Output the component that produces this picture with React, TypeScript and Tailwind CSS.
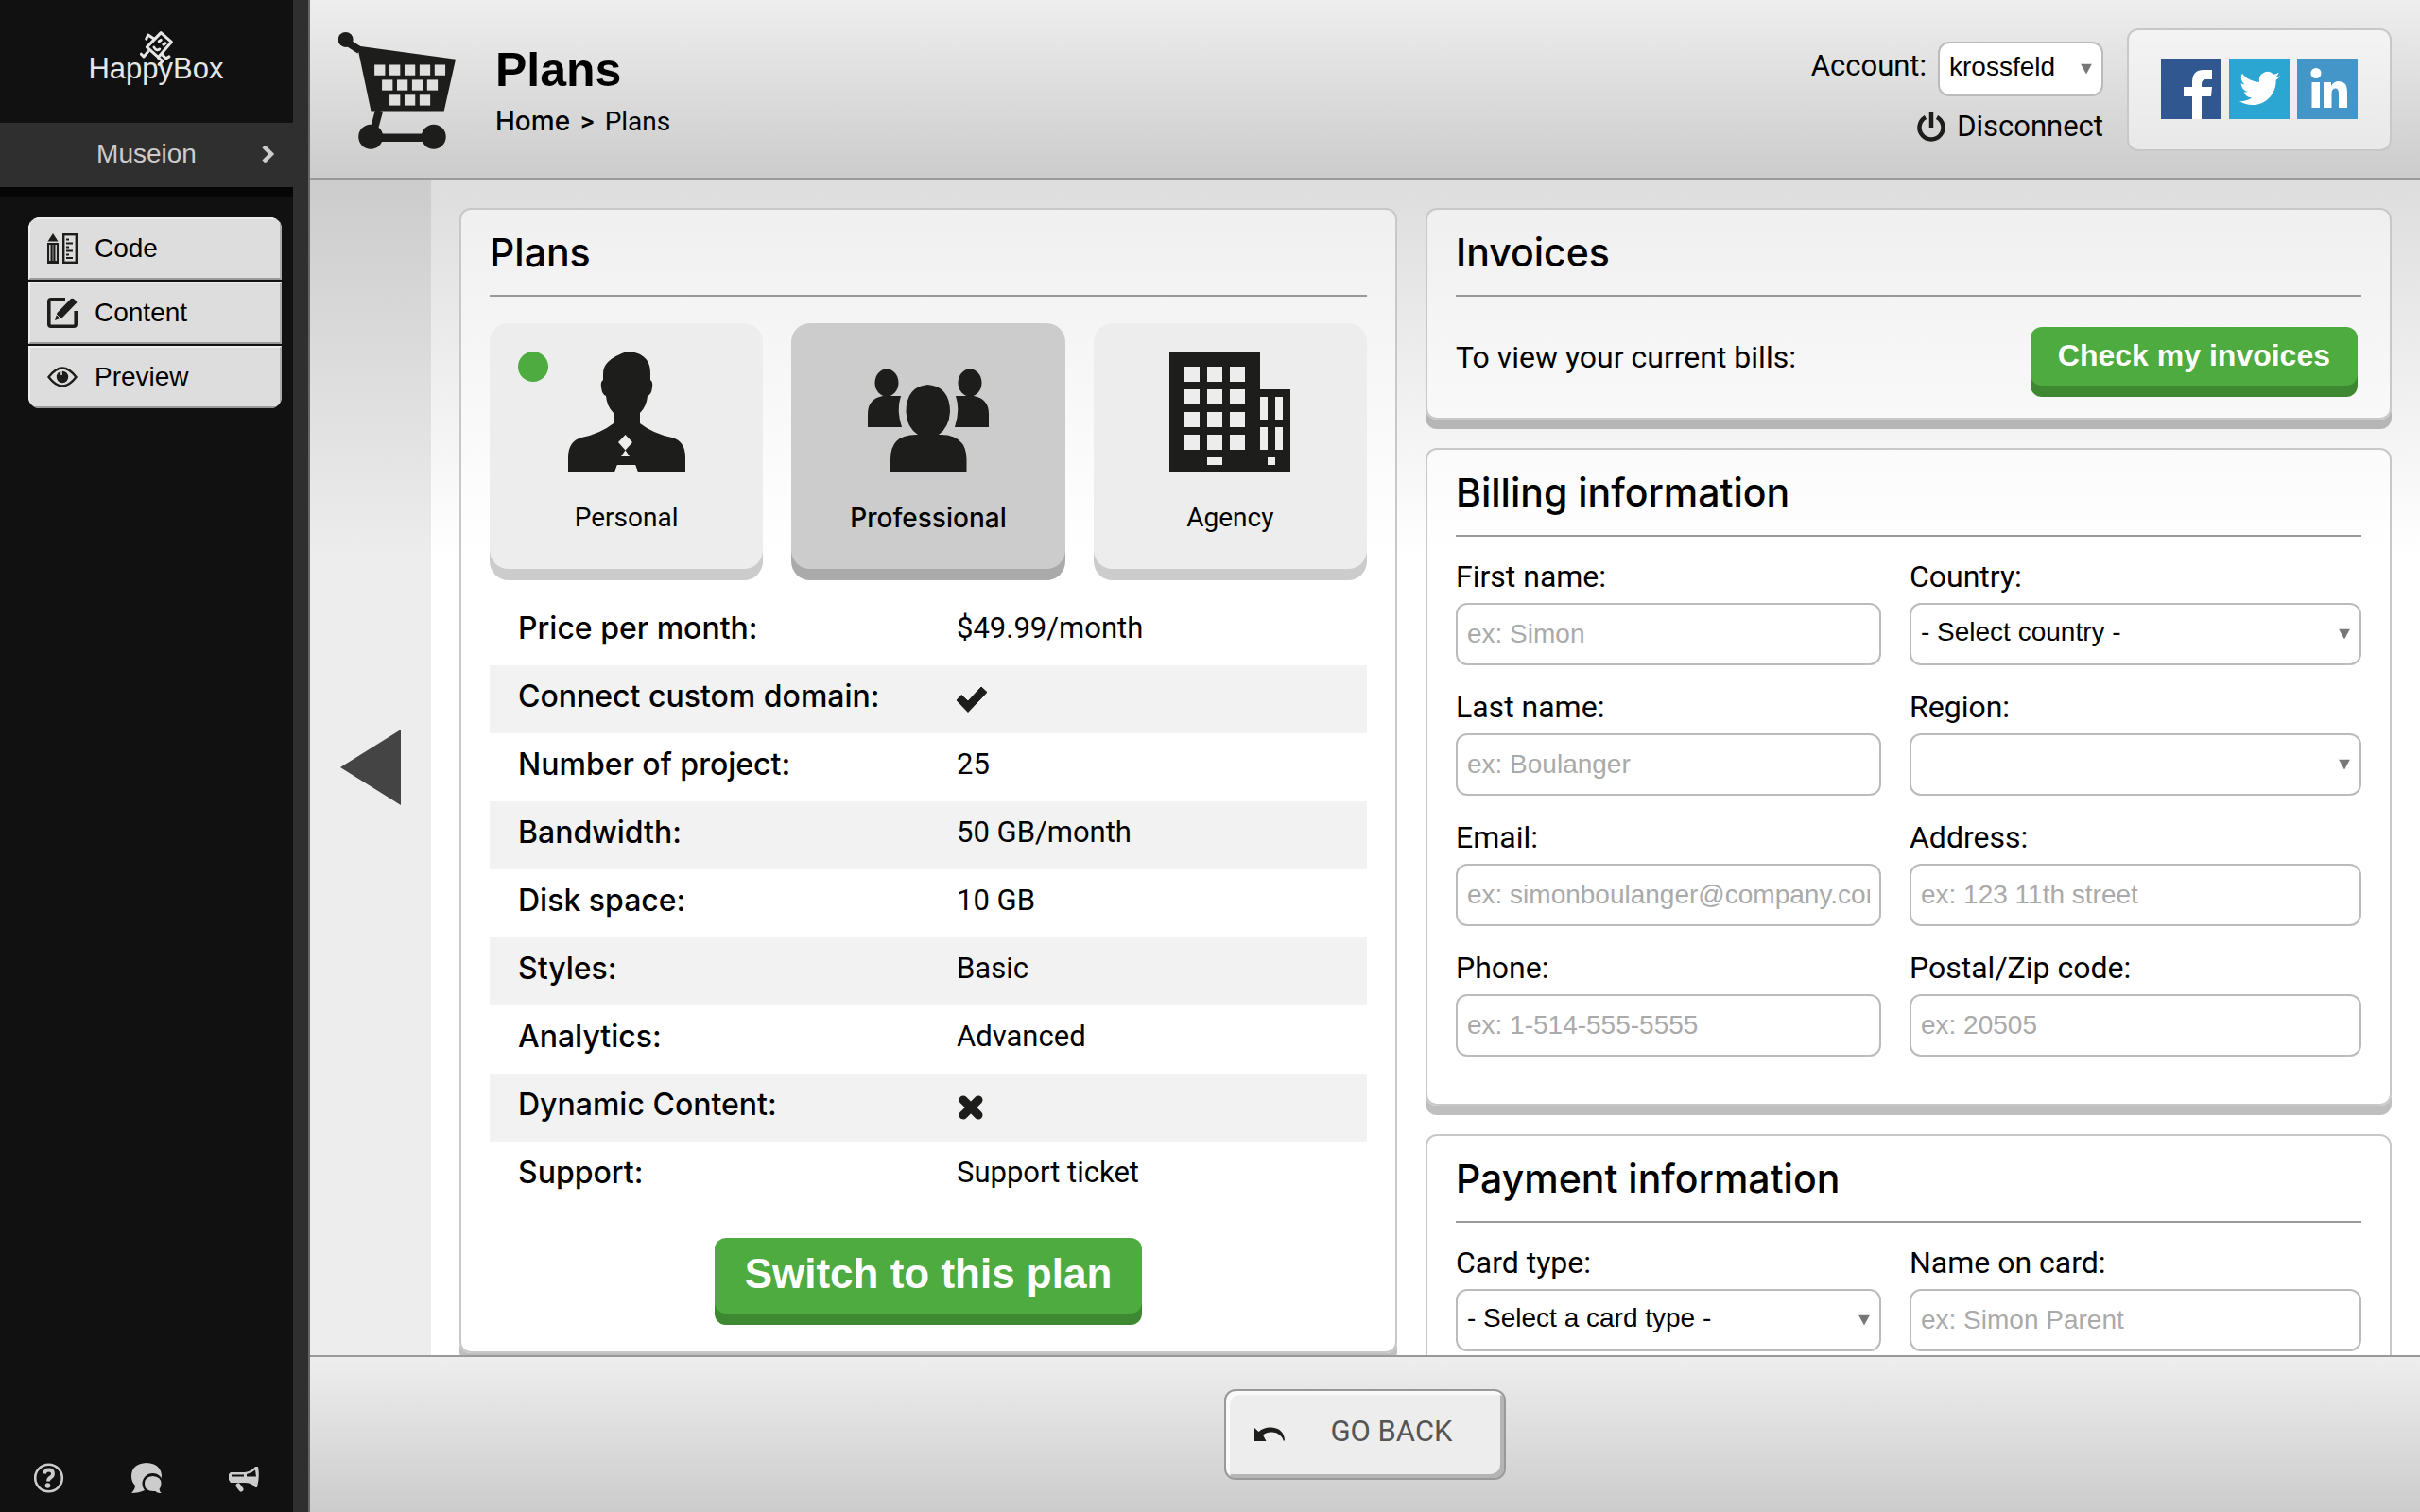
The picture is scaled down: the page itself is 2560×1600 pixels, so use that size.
import type { ReactNode } from "react";

const INK = "#1d1d1b";

/* ---------- drawings ---------- */

function CartIcon() {
  const holes = [
    [139, 130], [187, 130], [235, 130], [283, 130], [331, 130],
    [163, 178], [211, 178], [259, 178], [307, 178],
    [187, 226], [235, 226], [283, 226],
  ];
  return (
    <svg viewBox="24 26 374 374" className="size-31 shrink-0" aria-hidden="true">
      <circle cx="47" cy="50" r="24" fill={INK} />
      <path d="M52 58 L92 84" stroke={INK} strokeWidth="24" />
      <path d="M84 70 L398 113 L361 278 H128 Z" fill={INK} />
      {holes.map(([x, y]) => (
        <rect key={`${x}-${y}`} x={x} y={y} width="34" height="34" fill="#dfdfdf" />
      ))}
      <path d="M154 276 L138 335" stroke={INK} strokeWidth="25" />
      <path d="M128 363 H327" stroke={INK} strokeWidth="25" />
      <circle cx="127" cy="360" r="39" fill={INK} />
      <circle cx="328" cy="360" r="39" fill={INK} />
    </svg>
  );
}

function BoxFigure() {
  return (
    <svg viewBox="0 0 104 110" className="-mb-3 h-[37px] w-[35px]" fill="none" stroke="#e6e6e6" strokeWidth="9" strokeLinecap="round" strokeLinejoin="round" aria-hidden="true">
      <path d="M66 5 L99 34 L58 82 L22 50 Z" />
      <path d="M20 24 L26 12 L44 24" />
      <path d="M4 72 L12 80 L26 64" />
      <path d="M70 74 L82 86 L92 80" />
      <path d="M58 84 L72 94 L60 105" />
      <path d="M60 32 L66 28 M74 42 L80 38" strokeWidth="9" />
      <path d="M44 50 Q52 64 62 56" strokeWidth="8" />
    </svg>
  );
}

function CodeIcon() {
  return (
    <svg viewBox="0 0 32 32" className="size-8" aria-hidden="true">
      <path d="M6 0 L11.500 8.500 H0.500 Z" fill={INK} />
      <path d="M0 10 H12 V32 H0 Z" fill={INK} />
      <path d="M2.800 12 V29 M9.200 12 V29" stroke="#ddd" strokeWidth="1.400" />
      <path d="M6 12 V29" stroke="#999" strokeWidth="1" />
      <rect x="17.200" y="1.200" width="13.600" height="29.600" fill="none" stroke={INK} strokeWidth="2.400" />
      <path d="M20 6.500 H23 M20 10.500 H27 M20 14.500 H23 M20 18.500 H27 M20 22.500 H23 M20 26 H27" stroke={INK} strokeWidth="1.800" />
    </svg>
  );
}

function EditIcon() {
  return (
    <svg viewBox="0 0 32 32" className="size-8" aria-hidden="true">
      <path d="M19 1.800 H4 Q1.800 1.800 1.800 4 V28 Q1.800 30.200 4 30.200 H28 Q30.200 30.200 30.200 28 V14" fill="none" stroke={INK} strokeWidth="3.600" />
      <path d="M8 24 L10.500 16 L25 1 Q27 0 29 2 L31.500 5 L16 21 Z" fill={INK} />
      <path d="M10 18 L14.500 22.500" stroke="#ddd" strokeWidth="1" />
    </svg>
  );
}

function EyeIcon() {
  return (
    <svg viewBox="0 0 32 32" className="size-8" aria-hidden="true">
      <path d="M1.500 16 Q16 -3 30.500 16 Q16 35 1.500 16 Z" fill="none" stroke={INK} strokeWidth="2.400" />
      <circle cx="16" cy="16" r="6.200" fill={INK} />
      <path d="M15 9 V14" stroke="#ddd" strokeWidth="1.600" />
    </svg>
  );
}

function PowerIcon() {
  return (
    <svg viewBox="0 0 30 32" className="h-8 w-[30px]" fill="none" stroke={INK} strokeWidth="4.500" aria-hidden="true">
      <path d="M9 6 A12.500 12.500 0 1 0 21 6" />
      <path d="M15 1 V17" />
    </svg>
  );
}

function FacebookIcon() {
  return (
    <svg viewBox="0 0 64 64" className="size-16" aria-hidden="true">
      <rect width="64" height="64" fill="#30578f" />
      <path d="M33 64 V40 H24 V30 H33 V25 Q33 12 45 12 H54 V22 H48 Q43 22 43 27 V30 H54 L53 40 H43 V64 Z" fill="#fff" />
    </svg>
  );
}

function TwitterIcon() {
  return (
    <svg viewBox="0 0 64 64" className="size-16" aria-hidden="true">
      <rect width="64" height="64" fill="#2ba5d2" />
      <svg x="11" y="10" width="43" height="43" viewBox="0 0 24 24">
        <path
          fill="#fff"
          d="M23.953 4.570a10 10 0 01-2.825.775 4.958 4.958 0 002.163-2.723c-.951.555-2.005.959-3.127 1.184a4.920 4.920 0 00-8.384 4.482C7.690 8.095 4.067 6.130 1.640 3.162a4.822 4.822 0 00-.666 2.475c0 1.710.870 3.213 2.188 4.096a4.904 4.904 0 01-2.228-.616v.060a4.923 4.923 0 003.946 4.827 4.996 4.996 0 01-2.212.085 4.936 4.936 0 004.604 3.417 9.867 9.867 0 01-6.102 2.105c-.390 0-.779-.023-1.170-.067a13.995 13.995 0 007.557 2.209c9.053 0 13.998-7.496 13.998-13.985 0-.210 0-.420-.015-.630A9.935 9.935 0 0024 4.590z"
        />
      </svg>
    </svg>
  );
}

function LinkedInIcon() {
  return (
    <svg viewBox="0 0 64 64" className="size-16" aria-hidden="true">
      <rect width="64" height="64" fill="#4496c8" />
      <circle cx="20" cy="15.500" r="5.500" fill="#fff" />
      <path d="M15.500 25 H24 V52 H15.500 Z" fill="#fff" />
      <path d="M28 25 H36 V29 Q39 24 44 24 Q53 24 53 35 V52 H44 V37 Q44 31.500 40.500 31.500 Q36.500 31.500 36.500 37 V52 H28 Z" fill="#fff" />
    </svg>
  );
}

function PersonalIcon() {
  return (
    <svg viewBox="0 0 128 128" className="size-32" aria-hidden="true">
      <path
        fill={INK}
        d="M64 0 C80 0 90 9 89 24 V30 Q92 32 91 38 Q90 46 86 47 Q85 58 78 65 V76 Q92 87 112 91 Q126 95 126 112 V128 H76 L73 120 H54 L51 128 H2 V112 Q2 95 16 91 Q36 87 50 76 V65 Q43 58 42 47 Q38 46 37 38 Q36 32 39 30 V24 Q38 9 64 0 Z"
      />
      <path d="M54 120 H73 L76 128 H51 Z" fill="#ededed" />
      <path d="M62.500 88 L70 96 L62.500 104.500 L55 96 Z" fill="#ededed" />
      <path d="M62.500 104.500 L67 111 H58 Z" fill="#ededed" />
    </svg>
  );
}

function TeamIcon() {
  return (
    <svg viewBox="0 0 128 128" className="size-32" aria-hidden="true">
      <g fill={INK}>
        <ellipse cx="20" cy="33" rx="12.500" ry="14.500" />
        <path d="M16 47 H35 Q30 62 36 80 H0 V66 Q0 50 16 47 Z" />
        <ellipse cx="108" cy="33" rx="12.500" ry="14.500" />
        <path d="M112 47 H93 Q98 62 92 80 H128 V66 Q128 50 112 47 Z" />
        <path d="M63.500 35 Q87 37 87 64 Q86 80 75 88 Q104 87 104.500 114 V128 H24 V114 Q24 87 53 88 Q41 80 40.500 64 Q40.500 37 63.500 35 Z" />
      </g>
    </svg>
  );
}

function AgencyIcon() {
  return (
    <svg viewBox="0 0 128 128" className="size-32" aria-hidden="true">
      <path d="M0 0 H96 V40 H128 V128 H0 Z" fill={INK} />
      <g fill="#ededed">
        {[16, 40, 64, 88].map((y) =>
          [16, 40, 64].map((x) => <rect key={`${x}-${y}`} x={x} y={y} width="16" height="16" />)
        )}
        {[48, 80].map((y) =>
          [96, 112].map((x) => <rect key={`${x}-${y}`} x={x} y={y} width="8" height="24" />)
        )}
        <rect x="40" y="112" width="16" height="8" />
        <rect x="104" y="112" width="8" height="8" />
      </g>
    </svg>
  );
}

function Tick() {
  return (
    <svg viewBox="0 0 32 32" className="size-8" role="img" aria-label="Yes">
      <path d="M0 17 L5 11.500 L12 18 L26 3 L32 8.500 L12 29.500 Z" fill={INK} stroke={INK} strokeLinejoin="round" />
    </svg>
  );
}

function Cross() {
  return (
    <svg viewBox="0 0 32 32" className="size-8" role="img" aria-label="No">
      <path d="M7 8 L23 24 M23 8 L7 24" stroke={INK} strokeWidth="9" strokeLinecap="round" />
    </svg>
  );
}

function BackIcon() {
  return (
    <svg viewBox="0 0 32 32" className="size-8" aria-hidden="true">
      <path d="M0 9 L4.500 13 Q10 8 18 8.500 Q31 9.500 32 22 L31 23 Q28 14 19 13.500 Q13 13 9 16.500 L12.500 23 H0 Z" fill={INK} />
    </svg>
  );
}

function HelpIcon() {
  return (
    <svg viewBox="0 0 32 32" className="size-8" aria-hidden="true">
      <circle cx="15.500" cy="16" r="14.300" fill="none" stroke="#ccc" strokeWidth="2.600" />
      <path d="M11 11.500 Q11.500 7.500 15.500 7.500 Q20 7.500 20 11.500 Q20 14 17.500 15.500 Q15 17 15 19.500" fill="none" stroke="#ccc" strokeWidth="3.800" />
      <circle cx="14.500" cy="24" r="2.800" fill="#ccc" />
    </svg>
  );
}

function ChatIcon() {
  return (
    <svg viewBox="0 0 32 32" className="size-8" aria-hidden="true">
      <path d="M16 0 Q32 1 32 15 Q31 29 14 29 Q8 32 0 32 Q4 28 4 24 Q0 20 0 14 Q0 1 16 0 Z" fill="#ccc" />
      <circle cx="22.500" cy="22" r="11" fill="#111" />
      <path d="M22.500 14 Q31.500 14.500 31.500 22 Q31.500 25.500 29.500 28 Q30 31 32 32 Q27 32 25.500 30 Q14 31 14 22 Q14 14.500 22.500 14 Z" fill="#ccc" />
    </svg>
  );
}

function MegaphoneIcon() {
  return (
    <svg viewBox="0 0 32 32" className="size-8" aria-hidden="true">
      <path d="M2 10 H17 Q24 9 28 4 H31 Q33 15 30 26 H28 Q24 21 17 21 H2 L0 18 V12 Z" fill="#ccc" />
      <path d="M3 12.500 H16 V14.500 H3 Z" fill="#111" />
      <path d="M19 14.500 V12 Q24 11 28 7.500 L29 14.500 Z" fill="#111" />
      <path d="M10 24 L13 28" stroke="#ccc" strokeWidth="5" strokeLinecap="round" />
    </svg>
  );
}

/* ---------- controls ---------- */

const CONTROL =
  "w-full rounded-xl border-2 border-[#bbb] bg-white px-[10px] font-['Liberation_Sans',sans-serif] text-[28px] text-black placeholder:text-[#aaa]";

function SelectBox({ id, options, heightClass }: { id: string; options: string[]; heightClass: string }) {
  return (
    <div className="relative">
      <select id={id} className={`${CONTROL} ${heightClass} appearance-none pb-1`}>
        {options.map((o) => (
          <option key={o}>{o}</option>
        ))}
      </select>
      <svg viewBox="0 0 12 11" className="pointer-events-none absolute top-1/2 right-3 h-[11px] w-3 -translate-y-1/2" aria-hidden="true">
        <path d="M0 0 H12 L6 11 Z" fill="#777" />
      </svg>
    </div>
  );
}

type FieldSpec = { id: string; label: string; placeholder?: string; options?: string[]; type?: string };

function Fields({ items }: { items: FieldSpec[] }) {
  return (
    <div className="grid grid-cols-[225fr_239fr] gap-x-[30px] gap-y-[2px]">
      {items.map((f) => (
        <div key={f.id} className="min-w-0">
          <label htmlFor={f.id} className="block pt-[22px] pb-2 text-[32px] leading-10">
            {f.label}
          </label>
          {f.options ? (
            <SelectBox id={f.id} options={f.options} heightClass="h-[66px]" />
          ) : (
            <input id={f.id} type={f.type ?? "text"} placeholder={f.placeholder} className={`${CONTROL} block h-[66px]`} />
          )}
        </div>
      ))}
    </div>
  );
}

function Card({ title, children }: { title: string; children: ReactNode }) {
  return (
    <section className="rounded-xl border-2 border-[#c8c8c8] bg-white/50 px-[30px] pb-[26px] shadow-[0_10px_0_rgba(0,0,0,0.25)]">
      <h2 className="flex h-[92px] items-center border-b-2 border-[#999] pt-[2px] font-[Inter,sans-serif] text-[41px] font-medium">
        {title}
      </h2>
      {children}
    </section>
  );
}

/* ---------- data ---------- */

const MENU = [
  { label: "Code", icon: <CodeIcon /> },
  { label: "Content", icon: <EditIcon /> },
  { label: "Preview", icon: <EyeIcon /> },
];

const FEATURES: [string, ReactNode][] = [
  ["Price per month:", "$49.99/month"],
  ["Connect custom domain:", <Tick />],
  ["Number of project:", "25"],
  ["Bandwidth:", "50 GB/month"],
  ["Disk space:", "10 GB"],
  ["Styles:", "Basic"],
  ["Analytics:", "Advanced"],
  ["Dynamic Content:", <Cross />],
  ["Support:", "Support ticket"],
];

const BILLING: FieldSpec[] = [
  { id: "first", label: "First name:", placeholder: "ex: Simon" },
  { id: "country", label: "Country:", options: ["- Select country -"] },
  { id: "last", label: "Last name:", placeholder: "ex: Boulanger" },
  { id: "region", label: "Region:", options: [""] },
  { id: "email", label: "Email:", placeholder: "ex: simonboulanger@company.com", type: "email" },
  { id: "address", label: "Address:", placeholder: "ex: 123 11th street" },
  { id: "phone", label: "Phone:", placeholder: "ex: 1-514-555-5555", type: "tel" },
  { id: "zip", label: "Postal/Zip code:", placeholder: "ex: 20505" },
];

const PAYMENT: FieldSpec[] = [
  { id: "card", label: "Card type:", options: ["- Select a card type -"] },
  { id: "holder", label: "Name on card:", placeholder: "ex: Simon Parent" },
];

/* ---------- page regions ---------- */

function Sidebar() {
  return (
    <aside className="flex w-[328px] shrink-0 border-r-2 border-[#666] bg-[#2f2f2f] font-['Liberation_Sans',sans-serif]">
      <div className="flex w-[310px] flex-col bg-[#111]">
        <a href="#home" className="flex h-[130px] flex-col items-center pt-[33px] pl-5 text-[31px] leading-[30px] text-[#e6e6e6]">
          <BoxFigure />
          HappyBox
        </a>
        <button type="button" className="relative flex h-[78px] items-center justify-center border-b-10 border-[#060606] bg-[#2f2f2f] pb-[2px] text-[28px] text-[#ccc]">
          Museion
          <svg viewBox="0 0 14 18" className="absolute right-[19px] h-[18px] w-[14px]" fill="none" stroke="#ccc" strokeWidth="4.500" aria-hidden="true">
            <path d="M2 1 L10 9 L2 17" />
          </svg>
        </button>
        <nav className="mt-[22px] mr-3 ml-[30px] flex flex-col gap-[2px] overflow-hidden rounded-xl text-[28px]">
          {MENU.map((m) => (
            <a
              key={m.label}
              href={`#${m.label.toLowerCase()}`}
              className="flex h-[66px] items-center gap-[18px] border-2 border-t-[#eee] border-r-[#aaa] border-b-[#999] border-l-[#eee] bg-[#ddd] pl-[18px]"
            >
              {m.icon}
              {m.label}
            </a>
          ))}
        </nav>
        <div className="mt-auto flex justify-between px-9 pb-5">
          <button type="button" aria-label="Help"><HelpIcon /></button>
          <button type="button" aria-label="Chat"><ChatIcon /></button>
          <button type="button" aria-label="News"><MegaphoneIcon /></button>
        </div>
      </div>
    </aside>
  );
}

function Header() {
  return (
    <header className="flex h-[190px] shrink-0 border-b-2 border-[#999] bg-linear-to-b from-[#eee] to-[#ccc] px-[30px]">
      <div className="flex pt-[34px]">
        <CartIcon />
        <div className="pl-[42px]">
          <h1 className="pt-[10px] font-['Liberation_Sans',sans-serif] text-[50px] leading-[60px] font-bold">Plans</h1>
          <p className="pt-1 text-[28px] leading-10">
            <a href="#home" className="font-[Inter,sans-serif] font-medium">Home</a>
            <span className="px-[11px] font-medium">&gt;</span>
            Plans
          </p>
        </div>
      </div>
      <div className="ml-auto pt-11 text-right text-[31px]">
        <div className="flex gap-3">
          <label htmlFor="account" className="leading-[52px]">Account:</label>
          <div className="w-[175px]">
            <SelectBox id="account" options={["krossfeld"]} heightClass="h-[58px]" />
          </div>
        </div>
        <a href="#disconnect" className="mt-3 flex items-center justify-end gap-3 leading-10">
          <PowerIcon />
          Disconnect
        </a>
      </div>
      <div className="mt-[30px] ml-[25px] flex h-[130px] items-center gap-2 rounded-xl border-2 border-[#c8c8c8] bg-white/50 px-[34px] pb-[2px]">
        <a href="#facebook" aria-label="Facebook"><FacebookIcon /></a>
        <a href="#twitter" aria-label="Twitter"><TwitterIcon /></a>
        <a href="#linkedin" aria-label="LinkedIn"><LinkedInIcon /></a>
      </div>
    </header>
  );
}

function PlansCard() {
  return (
    <Card title="Plans">
      <div className="mt-7 grid grid-cols-3 gap-[30px] pb-3 text-[28px]">
        <button type="button" className="relative flex h-[260px] flex-col items-center rounded-[20px] bg-[#ededed] pt-[30px] shadow-[0_12px_0_#ccc]">
          <span className="absolute top-[30px] left-[30px] size-8 rounded-full bg-[#4dab3f]" />
          <PersonalIcon />
          <span className="pt-7 leading-10">Personal</span>
        </button>
        <button type="button" aria-pressed="true" className="flex h-[260px] flex-col items-center rounded-[20px] bg-[#ccc] pt-[30px] shadow-[0_12px_0_#aaa]">
          <TeamIcon />
          <span className="pt-7 font-[Inter,sans-serif] leading-10 font-medium">Professional</span>
        </button>
        <button type="button" className="flex h-[260px] flex-col items-center rounded-[20px] bg-[#ededed] pt-[30px] shadow-[0_12px_0_#ccc]">
          <AgencyIcon />
          <span className="pt-7 leading-10">Agency</span>
        </button>
      </div>
      <table className="mt-[18px] w-full table-fixed text-left text-[32px]">
        <tbody>
          {FEATURES.map(([label, value]) => (
            <tr key={label} className="h-[72px] even:bg-[#f2f2f2]">
              <th scope="row" className="pb-[6px] pl-[30px] font-[Inter,sans-serif] font-medium">{label}</th>
              <td className={typeof value === "string" ? "pb-[6px] pl-[30px] text-[31px]" : "pl-[30px]"}>{value}</td>
            </tr>
          ))}
        </tbody>
      </table>
      <div className="flex justify-center pt-[30px] pb-[14px]">
        <button type="button" className="h-20 rounded-xl bg-[#4dab3f] px-8 pb-1 font-['Liberation_Sans',sans-serif] text-[44px] font-bold text-white shadow-[0_12px_0_#3d8830]">
          Switch to this plan
        </button>
      </div>
    </Card>
  );
}

export default function App() {
  return (
    <div className="flex h-screen overflow-hidden bg-white font-[Roboto,sans-serif] text-black">
      <Sidebar />
      <div className="flex min-w-0 flex-1 flex-col">
        <Header />
        <div className="flex min-h-0 flex-1">
          <button
            type="button"
            aria-label="Previous"
            className="flex w-32 shrink-0 items-center justify-center bg-[linear-gradient(to_bottom,#ccc,#ededed_400px)]"
          >
            <svg viewBox="0 0 64 80" className="h-20 w-16" aria-hidden="true">
              <path d="M64 0 V80 L0 40 Z" fill="#444" />
            </svg>
          </button>
          <main className="min-w-0 flex-1 overflow-hidden bg-[linear-gradient(to_bottom,#ddd,#fff_400px)] p-[30px]">
            <div className="grid grid-cols-[33fr_34fr] items-start gap-[30px]">
              <PlansCard />
              <div className="flex flex-col gap-[30px]">
                <Card title="Invoices">
                  <div className="flex items-center justify-between pt-8 pr-1 pb-2">
                    <p className="pt-[2px] text-[32px]">To view your current bills:</p>
                    <button type="button" className="h-[62px] rounded-xl bg-[#4dab3f] px-[29px] pb-[2px] font-['Liberation_Sans',sans-serif] text-[32px] font-bold text-white shadow-[0_12px_0_#3d8830]">
                      Check my invoices
                    </button>
                  </div>
                </Card>
                <Card title="Billing information">
                  <div className="pb-6">
                    <Fields items={BILLING} />
                  </div>
                </Card>
                <Card title="Payment information">
                  <Fields items={PAYMENT} />
                </Card>
              </div>
            </div>
          </main>
        </div>
        <footer className="flex h-[166px] shrink-0 items-center justify-center border-t-2 border-[#999] bg-linear-to-b from-[#eee] to-[#ccc]">
          <button
            type="button"
            className="flex h-24 items-center gap-12 rounded-xl border-2 border-[#999] bg-[#ededed] pr-[54px] pl-[30px] text-[31px] text-[#555] shadow-[inset_4px_4px_0_#fafafa,inset_-4px_-4px_0_#b4b4b4]"
          >
            <BackIcon />
            <span className="pb-[6px]">GO BACK</span>
          </button>
        </footer>
      </div>
    </div>
  );
}
